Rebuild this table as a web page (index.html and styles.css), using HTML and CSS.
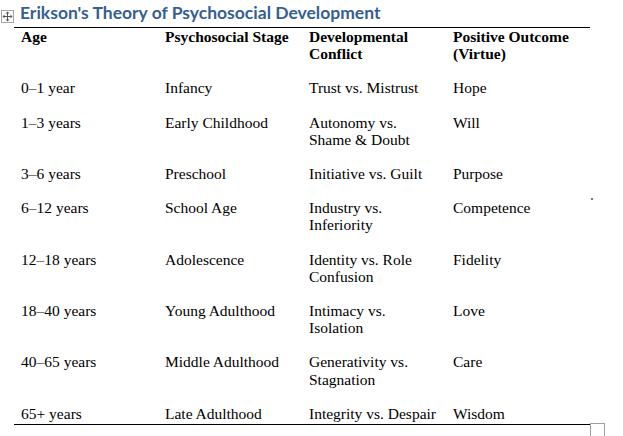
FILE: index.html
```html
<!DOCTYPE html>
<html>
<head>
<meta charset="utf-8">
<link rel="stylesheet" href="styles.css">
</head>
<body>
<div class="page">
  <div class="handle">
    <svg width="11" height="11" viewBox="0 0 11 11">
      <path d="M5.5 1V10M1 5.5H10" stroke="#555" stroke-width="1" fill="none"/>
      <path d="M5.5 0.5L3.5 2.5H7.5Z M5.5 10.5L3.5 8.5H7.5Z M0.5 5.5L2.5 3.5V7.5Z M10.5 5.5L8.5 3.5V7.5Z" fill="#555"/>
    </svg>
  </div>
  <h1 class="title">Erikson's Theory of Psychosocial Development</h1>
  <table class="erikson">
    <colgroup>
      <col class="c"><col class="c"><col class="c"><col class="c">
    </colgroup>
    <thead>
      <tr>
        <th><p>Age</p></th>
        <th><p>Psychosocial Stage</p></th>
        <th><p>Developmental<br>Conflict</p></th>
        <th><p>Positive Outcome<br>(Virtue)</p></th>
      </tr>
    </thead>
    <tbody>
      <tr><td><p>0–1 year</p></td><td><p>Infancy</p></td><td><p>Trust vs. Mistrust</p></td><td><p>Hope</p></td></tr>
      <tr><td><p>1–3 years</p></td><td><p>Early Childhood</p></td><td><p>Autonomy vs.<br>Shame &amp; Doubt</p></td><td><p>Will</p></td></tr>
      <tr><td><p>3–6 years</p></td><td><p>Preschool</p></td><td><p>Initiative vs. Guilt</p></td><td><p>Purpose</p></td></tr>
      <tr><td><p>6–12 years</p></td><td><p>School Age</p></td><td><p>Industry vs.<br>Inferiority</p></td><td><p>Competence</p></td></tr>
      <tr><td><p>12–18 years</p></td><td><p>Adolescence</p></td><td><p>Identity vs. Role<br>Confusion</p></td><td><p>Fidelity</p></td></tr>
      <tr><td><p>18–40 years</p></td><td><p>Young Adulthood</p></td><td><p>Intimacy vs.<br>Isolation</p></td><td><p>Love</p></td></tr>
      <tr><td><p>40–65 years</p></td><td><p>Middle Adulthood</p></td><td><p>Generativity vs.<br>Stagnation</p></td><td><p>Care</p></td></tr>
      <tr class="last"><td><p>65+ years</p></td><td><p>Late Adulthood</p></td><td><p>Integrity vs. Despair</p></td><td><p>Wisdom</p></td></tr>
    </tbody>
  </table>
  <div class="dot"></div>
  <div class="endmark"></div>
</div>
</body>
</html>
```
FILE: styles.css
```css
html, body {
  margin: 0;
  padding: 0;
  background: #ffffff;
}
.page {
  position: relative;
  width: 623px;
  height: 436px;
  overflow: hidden;
  padding-left: 14px;
  box-sizing: border-box;
}
.handle {
  position: absolute;
  left: 1px;
  top: 10px;
  width: 11px;
  height: 11px;
  border: 1px solid #a6a6a6;
  background: #fff;
  display: flex;
}
.title {
  margin: 0;
  padding: 2px 0 0 6px;
  height: 25px;
  box-sizing: content-box;
  font-family: Lato, "Liberation Sans", sans-serif;
  font-weight: bold;
  font-size: 17.5px;
  line-height: 22px;
  color: #365f91;
  white-space: nowrap;
}
.erikson {
  border-collapse: collapse;
  width: 576px;
  table-layout: fixed;
  border-top: 1px solid #000;
  border-bottom: 1px solid #000;
  font-family: "Liberation Serif", serif;
  font-size: 15.5px;
  color: #000;
}
.erikson col.c {
  width: 144px;
}
.erikson th, .erikson td {
  padding: 0 4px 0 7px;
  vertical-align: top;
  text-align: left;
  white-space: nowrap;
}
.erikson th {
  font-weight: bold;
}
.erikson p {
  margin: 0 0 17px 0;
  line-height: 17.2px;
}
.erikson tr.last p {
  margin-bottom: 2px;
}
.dot {
  position: absolute;
  left: 591px;
  top: 198px;
  width: 2px;
  height: 2px;
  background: #777;
}
.endmark {
  position: absolute;
  left: 590px;
  top: 423px;
  width: 13px;
  height: 20px;
  border: 1px solid #a0a0a0;
}
```
